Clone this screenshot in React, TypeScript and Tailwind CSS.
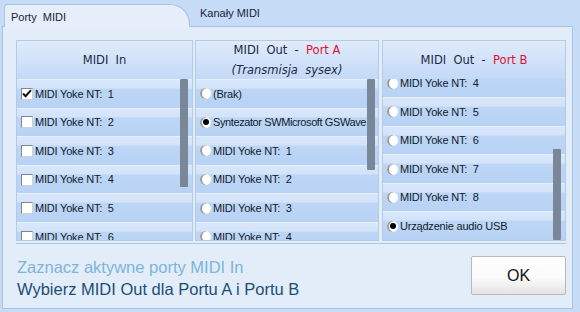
import React from "react";

type Item = { label: string; checked?: boolean; tight?: boolean };

const colIn: Item[] = [
  { label: "MIDI Yoke NT:  1", checked: true },
  { label: "MIDI Yoke NT:  2" },
  { label: "MIDI Yoke NT:  3" },
  { label: "MIDI Yoke NT:  4" },
  { label: "MIDI Yoke NT:  5" },
  { label: "MIDI Yoke NT:  6" },
];

const colOutA: Item[] = [
  { label: "(Brak)" },
  { label: "Syntezator SWMicrosoft GSWave", checked: true, tight: true },
  { label: "MIDI Yoke NT:  1" },
  { label: "MIDI Yoke NT:  2" },
  { label: "MIDI Yoke NT:  3" },
  { label: "MIDI Yoke NT:  4" },
];

// scrolled to the bottom, only the visible part is listed
const colOutB: Item[] = [
  { label: "MIDI Yoke NT:  4" },
  { label: "MIDI Yoke NT:  5" },
  { label: "MIDI Yoke NT:  6" },
  { label: "MIDI Yoke NT:  7" },
  { label: "MIDI Yoke NT:  8" },
  { label: "Urządzenie audio USB", checked: true },
];

function Checkbox({ checked }: { checked?: boolean }) {
  return (
    <span className="w-[12px] h-[12px] shrink-0 border border-[#7d8796] border-r-[#c9d2dc] border-b-[#c9d2dc] bg-white flex items-center justify-center">
      {checked && (
        <svg width="10" height="9" viewBox="0 0 10 9">
          <path d="M1 4.5 L3.6 7.2 L9 1.2" fill="none" stroke="#111" strokeWidth="2" />
        </svg>
      )}
    </span>
  );
}

function Radio({ checked }: { checked?: boolean }) {
  return (
    <span className="w-[11px] h-[11px] shrink-0 rounded-full bg-white shadow-[inset_2px_0_0_#9c9c9c] flex items-center justify-center">
      {checked && <span className="w-[6px] h-[6px] rounded-full bg-black" />}
    </span>
  );
}

function Row({ item, kind }: { item: Item; kind: "check" | "radio" }) {
  return (
    <div className="h-[28.6px] shrink-0 border-t border-[#e6effb] bg-[linear-gradient(#d9e7fa_0%,#d3e3f9_28%,#bdd6f6_34%,#b8d2f5_100%)] flex items-center pl-[4px] gap-[2px] text-[11px] tracking-[-0.2px] text-[#111a2a] whitespace-pre overflow-hidden">
      {kind === "check" ? <Checkbox checked={item.checked} /> : <Radio checked={item.checked} />}
      <span className={`relative z-10 ${item.tight ? "tracking-[-0.4px]" : ""}`}>{item.label}</span>
    </div>
  );
}

function Column({
  width,
  header,
  items,
  kind,
  bottom,
  thumb,
}: {
  width: string;
  header: React.ReactNode;
  items: Item[];
  kind: "check" | "radio";
  bottom?: boolean;
  thumb: string;
}) {
  return (
    <div className={`${width} h-[201px] flex flex-col border border-[#b4cbe8] bg-[#cfe1f8]`}>
      <div className="h-[38px] shrink-0 bg-[linear-gradient(#e0ebfb,#c3d9f7)] flex flex-col items-center justify-center font-['DejaVu_Sans',sans-serif] text-[11.5px] text-[#1d2a44] whitespace-pre leading-[20px]">
        {header}
      </div>
      <div className="relative flex-1 overflow-hidden">
        <div className={`absolute inset-0 flex flex-col ${bottom ? "justify-end" : "justify-start"}`}>
          {items.map((it, i) => (
            <Row key={i} item={it} kind={kind} />
          ))}
        </div>
        <div className={`absolute w-[8px] bg-[#7a8799] rounded-[1px] ${thumb}`} />
      </div>
    </div>
  );
}

export default function App() {
  return (
    <div className="w-[580px] h-[312px] bg-[#c5dbf6] flex flex-col font-['Liberation_Sans',Arial,sans-serif] overflow-hidden">
      <div className="h-[26px] shrink-0 flex items-end">
        <div className="relative z-10 ml-[4px] -mb-px w-[186px] h-[23px] bg-[#e5eef9] border border-b-0 border-[#a7c2e4] rounded-tl-[4px] rounded-tr-[20px] pl-[6px] pt-[4px] text-[11px] text-[#1b2436] whitespace-pre">
          Porty  MIDI
        </div>
        <div className="ml-[10px] mb-[5px] text-[11px] text-[#1b2436]">Kanały MIDI</div>
      </div>
      <div className="ml-[2px] w-[571px] h-[283px] border border-[#a7c2e4] bg-[#e3edf9] pl-[13px] pt-[13px]">
        <div className="flex">
          <Column
            width="w-[177px]"
            header={<span>MIDI  In</span>}
            items={colIn}
            kind="check"
            thumb="left-[163px] top-0 h-[108px]"
          />
          <div className="ml-[2px]">
            <Column
              width="w-[184px]"
              header={
                <>
                  <span>
                    MIDI  Out  -  <span className="text-[#e01030]">Port A</span>
                  </span>
                  <span className="italic">(Transmisja  sysex)</span>
                </>
              }
              items={colOutA}
              kind="radio"
              thumb="left-[171px] top-0 h-[91px]"
            />
          </div>
          <div className="ml-[3px]">
            <Column
              width="w-[184px]"
              header={
                <span>
                  MIDI  Out  -  <span className="text-[#e01030]">Port B</span>
                </span>
              }
              items={colOutB}
              kind="radio"
              bottom
              thumb="left-[170px] bottom-0 h-[91px]"
            />
          </div>
        </div>
        <div className="mt-[2px] w-[550px] h-px bg-[#b1c6e2]" />
        <div className="flex items-start mt-[12px] w-[550px]">
          <div className="ml-[1px] flex-1 text-[16.5px] leading-[22px]">
            <div className="text-[#7db5d7]">Zaznacz aktywne porty MIDI In</div>
            <div className="text-[#1d4d78]">Wybierz MIDI Out dla Portu A i Portu B</div>
          </div>
          <button className="w-[95px] h-[39px] border border-[#b9b9b9] rounded-[2px] bg-[linear-gradient(#ffffff_0%,#fbfbfb_55%,#e4e4e4_100%)] text-[16px] text-[#111]">
            OK
          </button>
        </div>
      </div>
    </div>
  );
}
